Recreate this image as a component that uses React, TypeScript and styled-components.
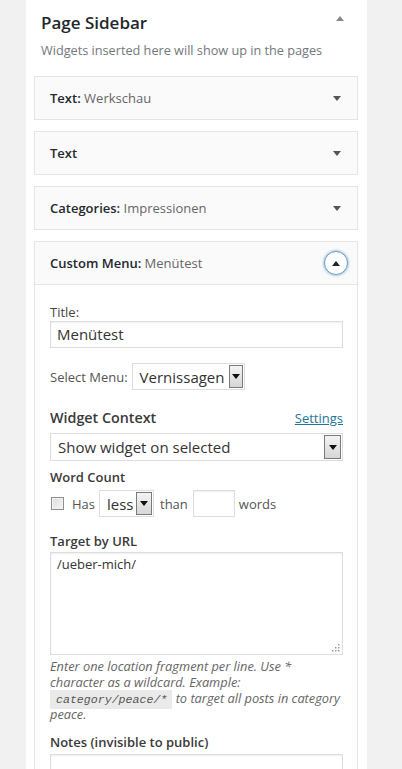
import React from 'react';
import styled, { createGlobalStyle } from 'styled-components';

const GlobalStyle = createGlobalStyle`
  html, body {
    margin: 0;
    padding: 0;
    background: #f1f1f1;
    font-family: "Open Sans", "Liberation Sans", sans-serif;
    color: #444;
  }
`;

const Sidebar = styled.div`
  margin-left: 26px;
  width: 341px;
  min-height: 769px;
  background: #fff;
  padding: 0 9px 0 8px;
  box-sizing: border-box;
`;

const SidebarHead = styled.div`
  display: flex;
  align-items: flex-start;
  justify-content: space-between;
  padding: 11px 14px 0 7px;
`;

const SidebarTitle = styled.h2`
  margin: 0;
  font-size: 17px;
  line-height: 24px;
  font-weight: 600;
  color: #23282d;
`;

const Caret = styled.span<{ $up?: boolean; $color?: string }>`
  display: block;
  width: 0;
  height: 0;
  border-left: 4px solid transparent;
  border-right: 4px solid transparent;
  ${(p) =>
    p.$up
      ? `border-bottom: 5px solid ${p.$color || '#555'};`
      : `border-top: 5px solid ${p.$color || '#555'};`}
`;

const HeadCaret = styled.div`
  margin-top: 5px;
`;

const SidebarDesc = styled.p`
  margin: 6px 0 17px 7px;
  font-size: 12.7px;
  line-height: 18px;
  color: #72777c;
`;

const Widget = styled.div`
  margin-bottom: 11px;
  border: 1px solid #e5e5e5;
  background: #fafafa;
`;

const WidgetTop = styled.div<{ $open?: boolean }>`
  height: 42px;
  display: flex;
  align-items: center;
  justify-content: space-between;
  padding: 0 16px 0 15px;
  ${(p) => p.$open && 'border-bottom: 1px solid #e5e5e5;'}
`;

const WidgetTitle = styled.h3`
  margin: 0;
  font-size: 13px;
  font-weight: 600;
  color: #23282d;
`;

const InTitle = styled.span`
  font-weight: 400;
  color: #666;
`;

const ToggleRing = styled.span`
  width: 22px;
  height: 22px;
  margin-right: -7px;
  border-radius: 50%;
  border: 1px solid #6f9cc0;
  box-shadow: 0 0 2px 1px rgba(30, 140, 190, 0.35);
  background: #fff;
  display: flex;
  align-items: center;
  justify-content: center;
`;

const WidgetBody = styled.div`
  background: #fff;
  padding: 18px 14px 0 15px;
  min-height: 500px;
`;

const Label = styled.div<{ $strong?: boolean; $size?: number }>`
  font-size: ${(p) => p.$size || 13}px;
  line-height: ${(p) => (p.$size && p.$size > 13 ? 20 : 18)}px;
  font-weight: ${(p) => (p.$strong ? 600 : 400)};
  color: ${(p) => (p.$strong ? '#3a3a3a' : '#444')};
`;

const TextInput = styled.div<{ $width?: number; $height?: number }>`
  box-sizing: border-box;
  width: ${(p) => (p.$width ? `${p.$width}px` : '100%')};
  height: ${(p) => p.$height || 27}px;
  border: 1px solid #ddd;
  box-shadow: inset 0 1px 2px rgba(0, 0, 0, 0.07);
  background: #fff;
  padding: 0 6px;
  font-size: 15px;
  line-height: 25px;
  color: #333;
`;

const FieldRow = styled.div<{ $gap?: number; $top?: number }>`
  display: flex;
  align-items: center;
  gap: ${(p) => p.$gap ?? 6}px;
  margin-top: ${(p) => p.$top || 0}px;
  font-size: 13px;
  color: #555;
`;

const Select = styled.div<{ $width?: number; $height?: number }>`
  box-sizing: border-box;
  display: flex;
  align-items: stretch;
  width: ${(p) => (p.$width ? `${p.$width}px` : '100%')};
  height: ${(p) => p.$height || 27}px;
  border: 1px solid #ddd;
  background: #fff;
  padding: 1px;
`;

const SelectValue = styled.span<{ $pad?: number }>`
  flex: 1;
  padding-left: ${(p) => p.$pad ?? 6}px;
  font-size: 15px;
  line-height: 24px;
  color: #333;
  white-space: nowrap;
  overflow: hidden;
`;

const SelectButton = styled.span<{ $width?: number }>`
  width: ${(p) => p.$width || 15}px;
  box-sizing: border-box;
  border: 1px solid #7a7a7a;
  background: linear-gradient(#f4f4f4, #d6d6d6);
  display: flex;
  align-items: center;
  justify-content: center;
`;

const ContextHead = styled.div`
  display: flex;
  align-items: center;
  justify-content: space-between;
  margin-top: 18px;
  margin-bottom: 5px;
`;

const SettingsLink = styled.a`
  font-size: 13px;
  color: #21759b;
  text-decoration: underline;
`;

const Checkbox = styled.span`
  box-sizing: border-box;
  width: 13px;
  height: 13px;
  margin: 0 8px 0 1px;
  border: 1px solid #8f8f8f;
  background: linear-gradient(135deg, #dcdcdc, #f6f6f6);
  box-shadow: inset 0 0 0 1px #f2f2f2;
`;

const WordsSelect = styled(Select)`
  margin: 0 6px 0 4px;
`;

const WordsInput = styled(TextInput)`
  margin: 0 4px 0 5px;
`;

const TextArea = styled.div`
  position: relative;
  box-sizing: border-box;
  height: 103px;
  margin-top: 2px;
  border: 1px solid #ddd;
  box-shadow: inset 0 1px 2px rgba(0, 0, 0, 0.07);
  padding: 1px 6px;
  font-size: 13px;
  line-height: 20px;
  color: #333;
`;

const Grip = styled.svg`
  position: absolute;
  right: 1px;
  bottom: 1px;
`;

const Help = styled.p`
  margin: 3px -6px 0 0;
  font-size: 12.8px;
  line-height: 16px;
  font-style: italic;
  color: #666;
`;

const HelpLine = styled.span`
  display: block;
  white-space: nowrap;
`;

const Code = styled.code`
  font-family: "Liberation Mono", "DejaVu Sans Mono", monospace;
  font-size: 11.6px;
  line-height: 0;
  background: #eaeaea;
  padding: 3px 5px 3px 6px;
  color: #555;
`;

const Gap = styled.div<{ $h: number }>`
  height: ${(p) => p.$h}px;
`;

const DownArrow = () => <Caret $color="#111" />;

const collapsed: { title: string; sub?: string }[] = [
  { title: 'Text:', sub: 'Werkschau' },
  { title: 'Text' },
  { title: 'Categories:', sub: 'Impressionen' },
];

const gripDots = [
  [7, 1],
  [4, 4],
  [7, 4],
  [1, 7],
  [4, 7],
  [7, 7],
];

export default function App() {
  return (
    <>
      <GlobalStyle />
      <Sidebar>
        <SidebarHead>
          <SidebarTitle>Page Sidebar</SidebarTitle>
          <HeadCaret>
            <Caret $up $color="#888" />
          </HeadCaret>
        </SidebarHead>
        <SidebarDesc>Widgets inserted here will show up in the pages</SidebarDesc>

        {collapsed.map((w) => (
          <Widget key={w.title + (w.sub || '')}>
            <WidgetTop>
              <WidgetTitle>
                {w.title}
                {w.sub && <InTitle> {w.sub}</InTitle>}
              </WidgetTitle>
              <Caret />
            </WidgetTop>
          </Widget>
        ))}

        <Widget>
          <WidgetTop $open>
            <WidgetTitle>
              Custom Menu:<InTitle> Menütest</InTitle>
            </WidgetTitle>
            <ToggleRing>
              <Caret $up $color="#222" />
            </ToggleRing>
          </WidgetTop>
          <WidgetBody>
            <Label>Title:</Label>
            <TextInput>Menütest</TextInput>

            <FieldRow $top={15} $gap={4}>
              <span>Select Menu:</span>
              <Select $width={113} $height={27}>
                <SelectValue>Vernissagen</SelectValue>
                <SelectButton $width={14}>
                  <DownArrow />
                </SelectButton>
              </Select>
            </FieldRow>

            <ContextHead>
              <Label $strong $size={14.3}>Widget Context</Label>
              <SettingsLink href="#">Settings</SettingsLink>
            </ContextHead>
            <Select $height={28}>
              <SelectValue>Show widget on selected</SelectValue>
              <SelectButton $width={17}>
                <DownArrow />
              </SelectButton>
            </Select>

            <Gap $h={7} />
            <Label $strong>Word Count</Label>
            <FieldRow $top={4} $gap={0}>
              <Checkbox />
              <span>Has</span>
              <WordsSelect $width={55} $height={27}>
                <SelectValue $pad={6}>less</SelectValue>
                <SelectButton $width={16}>
                  <DownArrow />
                </SelectButton>
              </WordsSelect>
              <span>than</span>
              <WordsInput $width={42} $height={27} />
              <span>words</span>
            </FieldRow>

            <Gap $h={15} />
            <Label $strong>Target by URL</Label>
            <TextArea>
              /ueber-mich/
              <Grip width="10" height="10" viewBox="0 0 10 10">
                {gripDots.map(([x, y]) => (
                  <rect key={`${x}-${y}`} x={x} y={y} width="1.5" height="1.5" fill="#9a9a9a" />
                ))}
              </Grip>
            </TextArea>
            <Help>
              <HelpLine>Enter one location fragment per line. Use *</HelpLine>
              <HelpLine>character as a wildcard. Example:</HelpLine>
              <HelpLine>
                <Code>category/peace/*</Code> to target all posts in category
              </HelpLine>
              <HelpLine>peace.</HelpLine>
            </Help>

            <Gap $h={11} />
            <Label $strong>Notes (invisible to public)</Label>
            <Gap $h={3} />
            <TextInput $height={40} />
          </WidgetBody>
        </Widget>
      </Sidebar>
    </>
  );
}
